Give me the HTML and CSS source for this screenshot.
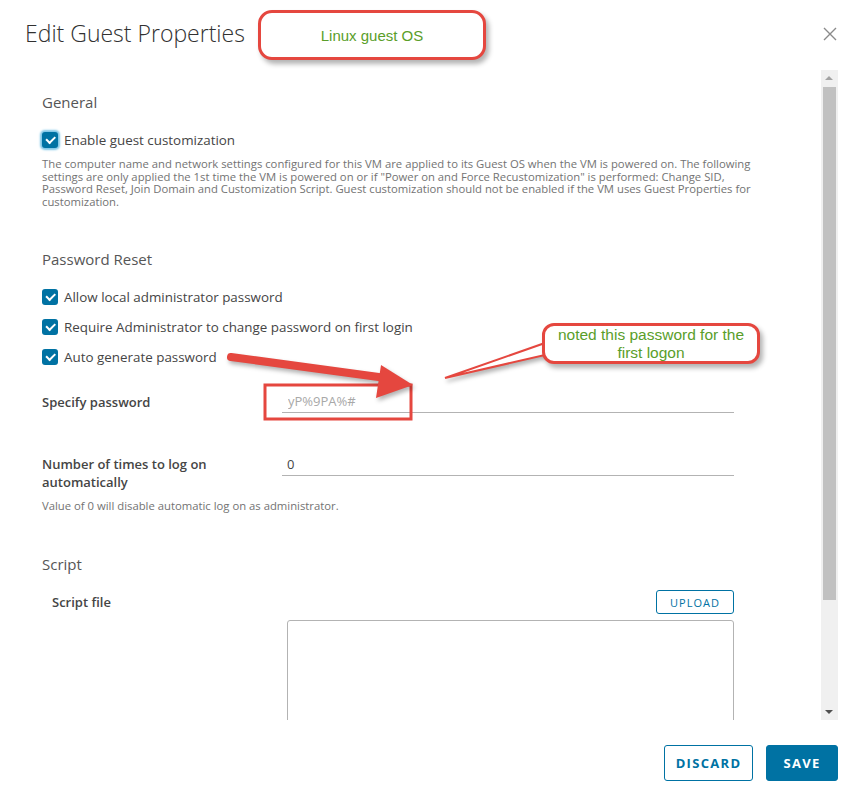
FILE: index.html
```html
<!DOCTYPE html>
<html>
<head>
<meta charset="utf-8" />
<title>Edit Guest Properties</title>
<link rel="stylesheet" href="styles.css">
</head>
<body>
<div class="modal">
    <header class="modal-head">
        <h3 class="modal-title">Edit Guest Properties</h3>
        <button class="close" aria-label="Close">
            <svg width="14" height="14" viewBox="0 0 14 14"><path d="M1 1L13 13M13 1L1 13" stroke="#8a8a8a" stroke-width="1.4" fill="none"/></svg>
        </button>
    </header>

    <div class="modal-body">
        <div class="content">
            <h4 class="section-title first">General</h4>
            <label class="check focus"><span class="box"></span>Enable guest customization</label>
            <p class="desc">The computer name and network settings configured for this VM are applied to its Guest OS when the VM is powered on. The following settings are only applied the 1st time the VM is powered on or if "Power on and Force Recustomization" is performed: Change SID, Password Reset, Join Domain and Customization Script. Guest customization should not be enabled if the VM uses Guest Properties for customization.</p>

            <h4 class="section-title">Password Reset</h4>
            <div class="checks">
                <label class="check"><span class="box"></span>Allow local administrator password</label>
                <label class="check"><span class="box"></span>Require Administrator to change password on first login</label>
                <label class="check"><span class="box"></span>Auto generate password</label>
            </div>

            <div class="row pw-row">
                <span class="row-label">Specify password</span>
                <input class="field" type="text" placeholder="yP%9PA%#">
            </div>

            <div class="row logon-row">
                <span class="row-label two-line">Number of times to log on automatically</span>
                <input class="field" type="text" value="0">
            </div>
            <p class="help">Value of 0 will disable automatic log on as administrator.</p>

            <h4 class="section-title script-title">Script</h4>
            <div class="script-row">
                <span class="script-label">Script file</span>
                <button class="btn-upload">UPLOAD</button>
            </div>
            <textarea class="script-box"></textarea>
        </div>
        <div class="scrollbar">
            <span class="sb-arrow up"></span>
            <span class="sb-thumb"></span>
            <span class="sb-rest"></span>
            <span class="sb-arrow down"></span>
        </div>
    </div>

    <footer class="modal-foot">
        <button class="btn btn-outline">DISCARD</button>
        <button class="btn btn-primary">SAVE</button>
    </footer>
</div>

<!-- annotations drawn over the screenshot -->
<div class="annot">
    <svg width="859" height="802" viewBox="0 0 859 802">
        <rect x="265" y="385" width="146" height="34" fill="none" stroke="#e5473f" stroke-width="3"/>
        <g class="shadowed">
            <line x1="231" y1="357" x2="386" y2="378" stroke="#e5473f" stroke-width="8" stroke-linecap="round"/>
            <polygon points="381,365 413,385 376,398" fill="#e5473f"/>
            <polygon points="445,378 545,343 545,355" fill="#fff" stroke="#e5473f" stroke-width="2" stroke-linejoin="miter"/>
        </g>
    </svg>
    <div class="callout callout-os">Linux guest OS</div>
    <div class="callout callout-pw">noted this password for the<br>first logon</div>
</div>
</body>
</html>
```

FILE: styles.css
```css
body{
    margin:0;
    background:#fff;
    font-family:"Open Sans", Lato, sans-serif;
    color:#454545;
}
.modal{
    width:859px;
    height:802px;
    display:flex;
    flex-direction:column;
    overflow:hidden;
}
.modal-head{
    height:70px;
    display:flex;
    align-items:flex-start;
    justify-content:space-between;
    padding:0 22px 0 25px;
    box-sizing:border-box;
}
.modal-title{
    margin:18px 0 0;
    font-size:23px;
    line-height:30px;
    font-weight:300;
    color:#313131;
}
.close{
    margin-top:27px;
    border:0;
    background:none;
    padding:0;
    width:14px;
    height:14px;
}
.modal-body{
    height:650px;
    display:flex;
    overflow:hidden;
}
.content{
    flex:1;
    padding:0 0 0 42px;
    overflow:hidden;
}
.section-title{
    margin:41px 0 0;
    font-size:15px;
    line-height:20px;
    font-weight:400;
    color:#565656;
}
.section-title.first{margin-top:22px;}
.section-title.script-title{margin-top:41px;}
.check{
    display:flex;
    align-items:center;
    height:16px;
    font-size:13.4px;
    color:#454545;
    margin-top:20px;
}
.checks .check{margin-top:14px;}
.checks .check:first-child{margin-top:20px;}
.box{
    width:16px;
    height:16px;
    border-radius:3px;
    background:#0072a3;
    margin-right:6px;
    position:relative;
    flex:none;
}
.box::after{
    content:"";
    position:absolute;
    left:4px;
    top:4px;
    width:7px;
    height:3.5px;
    border-left:2px solid #fff;
    border-bottom:2px solid #fff;
    transform:rotate(-45deg);
}
.check.focus .box{box-shadow:0 0 2px 2px #7fc6e6;}
.desc{
    margin:10px 0 0;
    width:728px;
    font-size:11.3px;
    line-height:12.5px;
    color:#737373;
}
.row{
    display:flex;
    width:692px;
    align-items:flex-start;
}
.row-label{
    width:240px;
    flex:none;
    font-size:13px;
    font-weight:600;
    color:#454545;
    line-height:24px;
    padding-top:1px;
}
.row-label.two-line{
    line-height:18px;
    padding-top:2px;
    width:200px;
    margin-right:40px;
}
.pw-row{margin-top:24px;}
.logon-row{margin-top:39px;}
.field{
    flex:1;
    height:24px;
    box-sizing:border-box;
    border:0;
    border-bottom:1px solid #b3b3b3;
    padding:0 6px;
    font-family:inherit;
    font-size:13px;
    color:#454545;
    outline:none;
}
.logon-row .field{height:23px;padding-left:5px;}
.field::placeholder{color:#a8a8a8;}
.help{
    margin:8px 0 0;
    font-size:11.3px;
    line-height:14px;
    color:#737373;
}
.script-row{
    display:flex;
    justify-content:space-between;
    align-items:center;
    width:692px;
    margin-top:16px;
}
.script-label{
    padding-left:10px;
    font-size:13px;
    font-weight:600;
    color:#454545;
    line-height:24px;
}
.btn-upload{
    height:24px;
    width:78px;
    border:1px solid #0072a3;
    border-radius:3px;
    background:#fff;
    color:#0072a3;
    font-family:inherit;
    font-size:11px;
    letter-spacing:1px;
    padding:0;
}
.script-box{
    display:block;
    margin:6px 0 0 245px;
    width:447px;
    height:150px;
    box-sizing:border-box;
    border:1px solid #b3b3b3;
    border-radius:3px;
    resize:none;
}
.scrollbar{
    width:17px;
    margin-right:21px;
    background:#f0f0f0;
    display:flex;
    flex-direction:column;
    align-items:center;
}
.sb-arrow{
    height:17px;
    width:17px;
    position:relative;
    flex:none;
}
.sb-arrow::after{
    content:"";
    position:absolute;
    left:4px;
    border-left:4px solid transparent;
    border-right:4px solid transparent;
}
.sb-arrow.up::after{top:6px;border-bottom:4px solid #a3a3a3;}
.sb-arrow.down::after{top:7px;border-top:4px solid #505050;}
.sb-thumb{
    width:13px;
    height:513px;
    background:#c1c1c1;
    flex:none;
}
.sb-rest{flex:1;}
.modal-foot{
    flex:1;
    display:flex;
    justify-content:flex-end;
    align-items:flex-start;
    gap:13px;
    padding:25px 21px 0 0;
}
.btn{
    height:36px;
    border-radius:3px;
    font-family:inherit;
    font-size:13px;
    font-weight:700;
    letter-spacing:1.3px;
    padding:0;
}
.btn-outline{
    width:89px;
    border:1px solid #0072a3;
    background:#fff;
    color:#0072a3;
}
.btn-primary{
    width:72px;
    border:1px solid #0072a3;
    background:#0072a3;
    color:#fff;
}

/* annotations */
.annot{
    position:absolute;
    left:0;
    top:0;
    width:859px;
    height:802px;
    pointer-events:none;
}
.annot svg{position:absolute;left:0;top:0;}
.shadowed{filter:drop-shadow(2px 3px 2px rgba(0,0,0,.3));}
.callout{
    position:absolute;
    box-sizing:border-box;
    border:3px solid #e5473f;
    border-radius:14px;
    background:#fff;
    box-shadow:3px 4px 5px rgba(0,0,0,.3);
    display:flex;
    align-items:center;
    justify-content:center;
    text-align:center;
    font-family:"Liberation Sans", Arial, sans-serif;
    color:#5a9e2a;
}
.callout-os{
    left:258px;
    top:10px;
    width:228px;
    height:50px;
    font-size:15px;
}
.callout-pw{
    left:542px;
    top:323px;
    width:218px;
    height:41px;
    font-size:15.5px;
    line-height:18px;
    border-radius:12px;
}
```
